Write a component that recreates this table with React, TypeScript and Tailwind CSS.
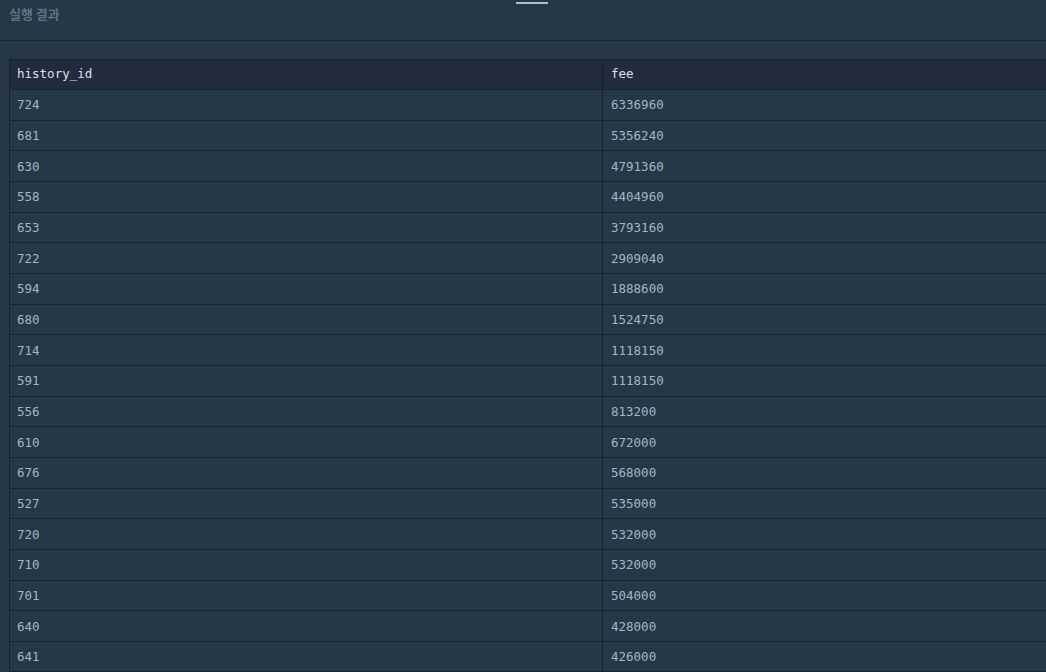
import React from "react";

const rows: [string, string][] = [
  ["724", "6336960"],
  ["681", "5356240"],
  ["630", "4791360"],
  ["558", "4404960"],
  ["653", "3793160"],
  ["722", "2909040"],
  ["594", "1888600"],
  ["680", "1524750"],
  ["714", "1118150"],
  ["591", "1118150"],
  ["556", "813200"],
  ["610", "672000"],
  ["676", "568000"],
  ["527", "535000"],
  ["720", "532000"],
  ["710", "532000"],
  ["701", "504000"],
  ["640", "428000"],
  ["641", "426000"],
];

export default function App() {
  return (
    <div className="relative w-[1046px] h-[672px] overflow-hidden bg-[#263747]">
      <div className="absolute left-[516px] top-[2px] w-[32px] h-[2px] bg-[#b2c0cc]" />
      <div className="h-[41px] border-b border-[#172334] px-[9px] pt-[4px]">
        <span
          className="block text-[13px] font-bold text-[#5b7389] leading-[20px]"
          style={{ fontFamily: '"Noto Sans CJK KR", "Noto Sans", sans-serif' }}
        >
          실행 결과
        </span>
      </div>
      <div className="pl-[9px] pt-[18px]">
        <div
          className="w-[1188px] border-l border-t border-[#172334] text-[12.5px]"
          style={{ fontFamily: '"DejaVu Sans Mono", monospace' }}
        >
          <div className="flex h-[30px] bg-[#202b3d] border-b border-[#172334] text-[#d6e0ea]">
            <div className="w-[593px] shrink-0 flex items-center pl-[7px] border-r border-[#172334]">history_id</div>
            <div className="flex-1 flex items-center pl-[8px]">fee</div>
          </div>
          {rows.map(([a, b], i) => (
            <div key={i} className="flex h-[30.67px] border-b border-[#172334] text-[#a1b6c8]">
              <div className="w-[593px] shrink-0 flex items-center pl-[7px] pt-[2px] border-r border-[#172334]">{a}</div>
              <div className="flex-1 flex items-center pl-[8px] pt-[2px]">{b}</div>
            </div>
          ))}
        </div>
      </div>
    </div>
  );
}
